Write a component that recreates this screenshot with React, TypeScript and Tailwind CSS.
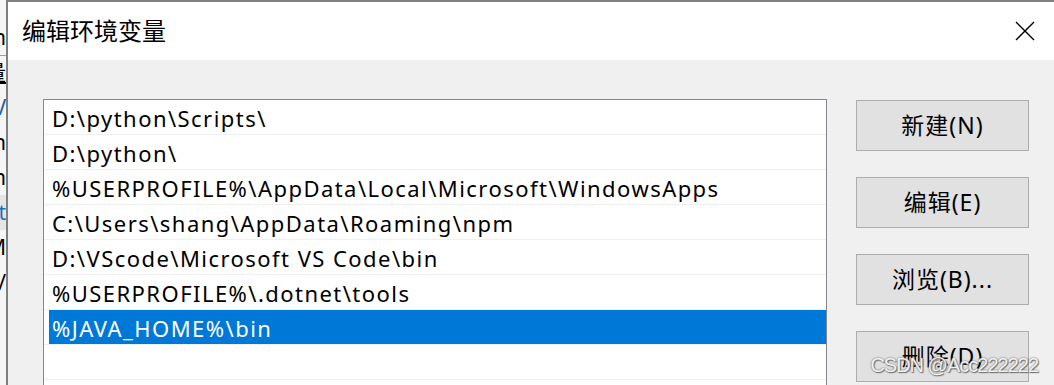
import { useState } from 'react';

const paths = [
  'D:\\python\\Scripts\\',
  'D:\\python\\',
  '%USERPROFILE%\\AppData\\Local\\Microsoft\\WindowsApps',
  'C:\\Users\\shang\\AppData\\Roaming\\npm',
  'D:\\VScode\\Microsoft VS Code\\bin',
  '%USERPROFILE%\\.dotnet\\tools',
  '%JAVA_HOME%\\bin',
  '',
];

// slivers of the window behind the dialog
const behind = [
  { t: 'n', cls: 'text-black' },
  { t: '变量', cls: 'text-black underline' },
  { t: '\\V', cls: 'text-[#1a5fb4]' },
  { t: 'n', cls: 'text-black' },
  { t: 'n', cls: 'text-black' },
  { t: 'ut', cls: 'text-[#1a6fc4] bg-[#e5e5e5]' },
  { t: 'M', cls: 'text-black' },
  { t: '/', cls: 'text-black' },
];

export default function App() {
  const [selected, setSelected] = useState(6);

  return (
    <div className="flex h-[385px] w-[1054px] overflow-hidden font-['Noto_Sans','Noto_Sans_CJK_SC',sans-serif] text-black">
      <div className="w-[6px] shrink-0 overflow-hidden bg-[#f5f5f5] pt-[20px]">
        {behind.map((b, i) => (
          <div
            key={i}
            className={`flex h-[35px] items-center justify-end whitespace-nowrap text-[21px] ${i === 1 ? 'border-t border-[#a0a0a0]' : ''} ${b.cls}`}
          >
            {b.t}
          </div>
        ))}
      </div>

      <div className="flex flex-1 flex-col border-l-2 border-t-2 border-[#7f7f7f]">
        <div className="flex h-[58px] shrink-0 items-center justify-between bg-white pl-[14px] pr-[19px]">
          <span className="text-[24px] leading-none">编辑环境变量</span>
          <svg width="20" height="20" viewBox="0 0 20 20">
            <path d="M1 1 L19 19 M19 1 L1 19" stroke="#000" strokeWidth="1.4" fill="none" />
          </svg>
        </div>

        <div className="flex flex-1 bg-[#f0f0f0] pl-[35px] pt-[39px]">
          <div className="h-[320px] w-[784px] shrink-0 border border-[#828790] bg-white">
            {paths.map((p, i) => (
              <div
                key={i}
                onClick={() => setSelected(i)}
                className="h-[35px] border-b border-[#f0f0f0] pl-[5px]"
              >
                <div
                  className={`flex h-full items-center whitespace-nowrap pl-[3px] pt-[3px] text-[22px] tracking-[1.45px] ${
                    i === selected ? 'bg-[#0078d7] text-white' : ''
                  }`}
                >
                  {p}
                </div>
              </div>
            ))}
          </div>

          <div className="ml-[29px] flex flex-col gap-[26px] pt-[1px]">
            {['新建(N)', '编辑(E)', '浏览(B)...', '删除(D)'].map((b) => (
              <button
                key={b}
                className="h-[51px] w-[173px] shrink-0 border border-[#adadad] bg-[#e1e1e1] text-[23px] tracking-[1px]"
              >
                {b}
              </button>
            ))}
          </div>
        </div>
      </div>

      <div className="absolute right-[16px] top-[350px] font-['Liberation_Sans',sans-serif] text-[20px] tracking-[-1px] text-white/90 [text-shadow:0_0_2px_#555,1px_1px_1px_#777]">
        CSDN @Acc222222
      </div>
    </div>
  );
}
